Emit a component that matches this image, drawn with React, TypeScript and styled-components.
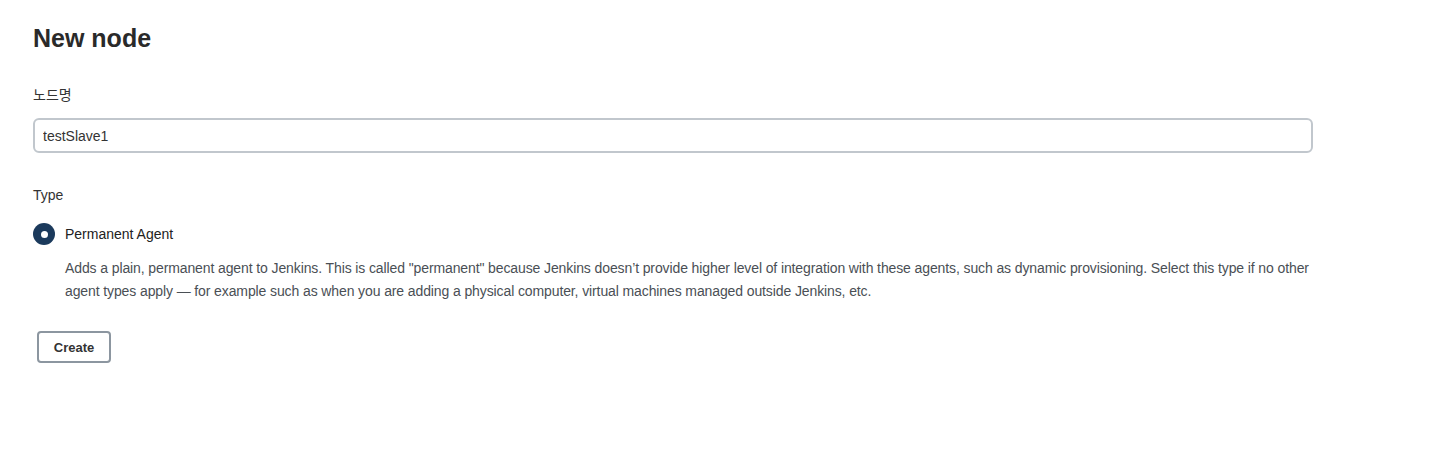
import React from "react";
import styled, { createGlobalStyle } from "styled-components";

const Global = createGlobalStyle`
  html, body { margin: 0; padding: 0; background: #fff; }
  body { font-family: "Liberation Sans", Arial, "Noto Sans CJK KR", sans-serif; color: #333; }
`;

const Page = styled.div`
  display: flex;
  flex-direction: column;
  padding: 23px 0 0 33px;
  width: 1280px;
`;

const Title = styled.h1`
  margin: 0;
  font-size: 25px;
  font-weight: 700;
  color: #2a2a2a;
  line-height: 30px;
`;

const Label = styled.div<{ $top: number }>`
  margin-top: ${(p) => p.$top}px;
  font-size: 14px;
  color: #333;
  line-height: 18px;
  font-family: "Liberation Sans", Arial, "Noto Sans CJK KR", sans-serif;
`;

const Input = styled.input`
  box-sizing: border-box;
  margin-top: 14px;
  width: 1280px;
  height: 35px;
  border: 2px solid #c1c7cd;
  border-radius: 6px;
  padding: 0 8px;
  font-family: "Liberation Sans", Arial, sans-serif;
  font-size: 14px;
  color: #333;
  outline: none;
`;

const RadioRow = styled.label`
  display: flex;
  align-items: center;
  gap: 10px;
  margin-top: 19px;
  font-size: 14px;
  color: #222;
`;

const RadioDot = styled.span`
  box-sizing: border-box;
  width: 22px;
  height: 22px;
  border-radius: 50%;
  background: #1b3a5c;
  display: flex;
  align-items: center;
  justify-content: center;
  &::after {
    content: "";
    width: 7px;
    height: 7px;
    border-radius: 50%;
    background: #fff;
  }
`;

const Description = styled.p`
  margin: 12px 0 0 32px;
  font-size: 14px;
  line-height: 23px;
  letter-spacing: -0.11px;
  color: #4a4f55;
`;

const Button = styled.button`
  align-self: flex-start;
  margin: 28px 0 0 4px;
  box-sizing: border-box;
  width: 74px;
  height: 32px;
  border: 2px solid #8c96a0;
  border-radius: 4px;
  background: #fff;
  font-family: "Liberation Sans", Arial, sans-serif;
  font-size: 13px;
  font-weight: 700;
  color: #333;
`;

export default function App() {
  return (
    <>
      <Global />
      <Page>
        <Title>New node</Title>
        <Label $top={33}>노드명</Label>
        <Input defaultValue="testSlave1" />
        <Label $top={33}>Type</Label>
        <RadioRow>
          <RadioDot />
          Permanent Agent
        </RadioRow>
        <Description>
          Adds a plain, permanent agent to Jenkins. This is called "permanent" because Jenkins doesn’t provide higher level of integration with these agents, such as dynamic provisioning. Select this type if no other agent types apply — for example such as when you are adding a physical computer, virtual machines managed outside Jenkins, etc.
        </Description>
        <Button>Create</Button>
      </Page>
    </>
  );
}
